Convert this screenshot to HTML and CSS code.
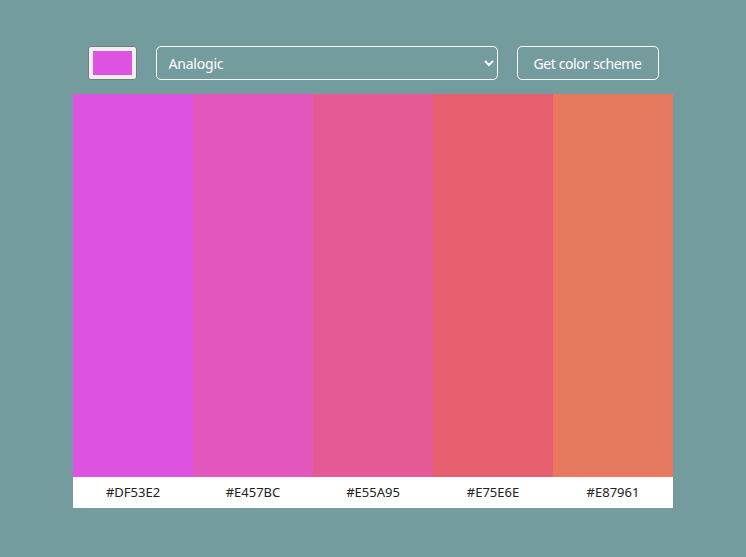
FILE: index.html
```html
<!DOCTYPE html>
<html lang="en">
<head>
    <meta charset="UTF-8">
    <meta name="viewport" content="width=device-width, initial-scale=1.0">
    <title>Color Scheme Generator</title>
    <link rel="stylesheet" href="styles.css">
</head>
<body>
    <main class="app">
        <form class="controls" id="controls">
            <input type="color" id="seed-color" class="seed-color" value="#df53e2">
            <select id="scheme-mode" class="scheme-mode">
                <option value="monochrome">Monochrome</option>
                <option value="analogic" selected>Analogic</option>
                <option value="complement">Complement</option>
                <option value="triad">Triad</option>
                <option value="quad">Quad</option>
            </select>
            <button type="submit" class="get-btn">Get color scheme</button>
        </form>
        <section class="scheme" id="scheme"></section>
    </main>
    <script>
        const colors = ["#DF53E2", "#E457BC", "#E55A95", "#E75E6E", "#E87961"];

        function renderScheme() {
            const scheme = document.getElementById("scheme");
            scheme.innerHTML = "";
            colors.forEach((hex) => {
                const col = document.createElement("div");
                col.className = "scheme-col";
                col.innerHTML = `
                    <div class="swatch" style="background-color: ${hex}"></div>
                    <p class="hex">${hex}</p>
                `;
                scheme.appendChild(col);
            });
        }

        document.getElementById("controls").addEventListener("submit", (e) => {
            e.preventDefault();
            renderScheme();
        });

        renderScheme();
    </script>
</body>
</html>
```

FILE: styles.css
```css
body {
    font-family: "Noto Sans", "Open Sans", sans-serif;
    margin: 0;
    padding: 0;
    background-color: #749c9e;
}
.app {
    width: 600px;
    margin: 0 auto;
    padding-top: 46px;
}
.controls {
    display: flex;
    justify-content: center;
    align-items: center;
    gap: 19px;
    height: 34px;
    margin: 0 0 14px 0;
}
.seed-color {
    -webkit-appearance: none;
    appearance: none;
    width: 49px;
    height: 34px;
    padding: 4px 4px;
    box-sizing: border-box;
    border: 1px solid #7a7a7a;
    border-radius: 3px;
    background-color: #efefef;
    cursor: pointer;
}
.seed-color::-webkit-color-swatch-wrapper {
    padding: 0;
}
.seed-color::-webkit-color-swatch {
    border: none;
}
.scheme-mode {
    width: 342px;
    height: 34px;
    padding: 0 8px;
    border: 1px solid #fff;
    border-radius: 5px;
    background-color: transparent;
    color: #fff;
    font-family: inherit;
    font-size: 14px;
    letter-spacing: -0.2px;
}
.scheme-mode option {
    color: #222;
}
.get-btn {
    width: 142px;
    height: 34px;
    border: 1px solid #fff;
    border-radius: 5px;
    background-color: transparent;
    color: #fff;
    font-family: inherit;
    font-size: 14px;
    letter-spacing: -0.4px;
    cursor: pointer;
}
.get-btn:hover {
    background-color: rgba(255, 255, 255, 0.1);
}
.scheme {
    display: flex;
    background: #fff;
}
.scheme-col {
    flex: 1;
}
.swatch {
    height: 383px;
}
.hex {
    margin: 0;
    height: 31px;
    line-height: 31px;
    text-align: center;
    font-size: 13px;
    color: #222;
}
```
